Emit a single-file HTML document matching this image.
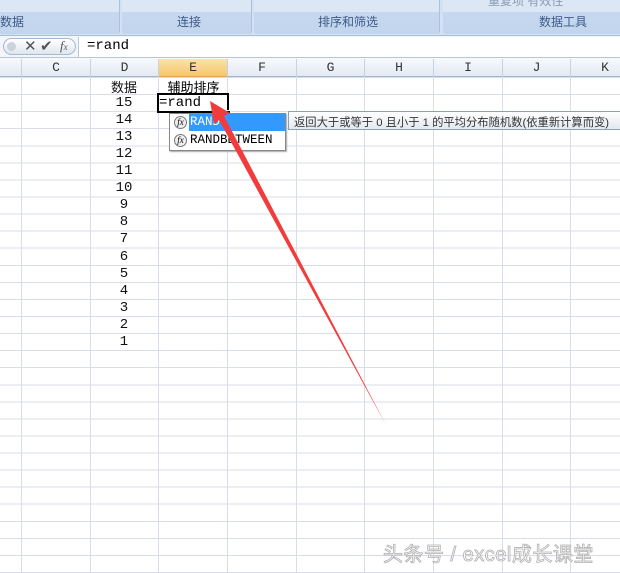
<!DOCTYPE html>
<html><head><meta charset="utf-8"><style>
*{margin:0;padding:0;box-sizing:border-box}
body{width:620px;height:573px;overflow:hidden;background:#fff;position:relative;font-family:"Liberation Mono","Noto Serif CJK SC",monospace}
.abs{position:absolute}
.rib{left:0;top:0;width:620px;height:36px;background:#d3e1f2;border-bottom:1px solid #a9bfd6}
.grp{position:absolute;top:0;height:34px;border-right:1px solid #a9c1dc;background:linear-gradient(#dce7f5 0,#dce7f5 12px,#c6d8ef 12px,#c2d5ee 34px);border-radius:0 0 3px 3px}
.gl{position:absolute;top:13px;font:12px "Liberation Sans","Noto Sans CJK SC",sans-serif;color:#3d5a86;text-align:center}
.fb{left:0;top:36px;width:620px;height:22px;background:#f3f5f9;border-bottom:1px solid #b9c6d8}
.grid{left:0;top:77px;width:620px;height:496px;
background-image:repeating-linear-gradient(to bottom,#d8dde9 0,#d8dde9 1px,transparent 1px,transparent 17.07px);}
.vl{position:absolute;top:58px;width:1px;height:515px;background:#d8dde9}
.hdr{left:0;top:58px;width:620px;height:19px;background:linear-gradient(#f7f9fc,#e4eaf3);border-bottom:1px solid #9eb6ce}
.hc{position:absolute;top:59px;height:18px;font-size:13px;color:#333;text-align:center;line-height:18px;border-right:1px solid #c5d2e2}
.num{position:absolute;left:91px;width:66px;text-align:center;font-size:14px;color:#111}
</style></head><body>
<div class="abs rib">
 <div class="grp" style="left:-5px;width:125px"></div>
 <div class="grp" style="left:122px;width:130px"></div>
 <div class="grp" style="left:254px;width:186px"></div>
 <div class="grp" style="left:443px;width:180px"></div>
 <div class="gl" style="left:0;top:13px">数据</div>
 <div class="gl" style="left:177px">连接</div>
 <div class="gl" style="left:318px">排序和筛选</div>
 <div class="gl" style="left:539px">数据工具</div>
 <div class="gl" style="left:488px;top:-8px;color:#8a9bb3">重复项 有效性</div>
</div>
<div class="abs fb">
 <div class="abs" style="left:3px;top:2px;width:73px;height:17px;border:1px solid #a8b9cf;border-radius:9px;background:linear-gradient(#fff,#dfe6f0)"></div>
 <div class="abs" style="left:7px;top:6px;width:9px;height:9px;border-radius:50%;background:#c9d2dd"></div>
 <div class="abs" style="left:24px;top:1px;font:15px 'Liberation Sans',sans-serif;color:#555">✕</div>
 <div class="abs" style="left:40px;top:1px;font:15px 'DejaVu Sans',sans-serif;color:#555">✔</div>
 <div class="abs" style="left:60px;top:2px;font:italic 13px 'Liberation Serif',serif;color:#555">f<span style="font-size:9px">x</span></div>
 <div class="abs" style="left:78px;top:1px;width:542px;height:20px;background:#fff;border-left:1px solid #b9c6d8"></div>
 <div class="abs" style="left:87px;top:2px;font-size:14px;color:#000">=rand</div>
</div>
<div class="abs grid"></div>
<div class="vl" style="left:21px"></div><div class="vl" style="left:90px"></div><div class="vl" style="left:158px"></div><div class="vl" style="left:227px"></div><div class="vl" style="left:296px"></div><div class="vl" style="left:364px"></div><div class="vl" style="left:433px"></div><div class="vl" style="left:502px"></div><div class="vl" style="left:570px"></div>
<div class="abs hdr"></div>
<div class="hc" style="left:0;width:22px"></div>
<div class="hc" style="left:22px;width:69px">C</div>
<div class="hc" style="left:91px;width:68px">D</div>
<div class="hc" style="left:159px;width:69px;background:linear-gradient(#fbe3a8,#f6c66b);border-bottom:1px solid #e4a84a">E</div>
<div class="hc" style="left:228px;width:69px">F</div>
<div class="hc" style="left:297px;width:68px">G</div>
<div class="hc" style="left:365px;width:69px">H</div>
<div class="hc" style="left:434px;width:69px">I</div>
<div class="hc" style="left:503px;width:68px">J</div>
<div class="hc" style="left:571px;width:69px">K</div>
<div class="num" style="top:77px;font-family:'Noto Sans CJK SC',sans-serif;font-size:13px">数据</div>
<div class="abs" style="left:159px;top:77px;width:69px;text-align:center;font:13px 'Noto Sans CJK SC',sans-serif">辅助排序</div>
<div class="num" style="top:95px">15</div><div class="num" style="top:112px">14</div><div class="num" style="top:129px">13</div><div class="num" style="top:146px">12</div><div class="num" style="top:163px">11</div><div class="num" style="top:180px">10</div><div class="num" style="top:197px">9</div><div class="num" style="top:214px">8</div><div class="num" style="top:231px">7</div><div class="num" style="top:249px">6</div><div class="num" style="top:266px">5</div><div class="num" style="top:283px">4</div><div class="num" style="top:300px">3</div><div class="num" style="top:317px">2</div><div class="num" style="top:334px">1</div>
<div class="abs" style="left:157px;top:93px;width:72px;height:20px;border:2px solid #000;background:#fff"></div>
<div class="abs" style="left:226px;top:110px;width:5px;height:5px;background:#000;border:1px solid #fff"></div>
<div class="abs" style="left:159px;top:95px;font-size:14px">=rand</div>
<div class="abs" style="left:169px;top:113px;width:117px;height:38px;background:#fff;border:1px solid #888;box-shadow:1px 1px 1px #aaa"></div>
<div class="abs" style="left:189px;top:114px;width:96px;height:17px;background:#3399ff"></div>
<div class="abs" style="left:174px;top:116px;width:13px;height:13px;border-radius:50%;border:1px solid #777;background:#eee;font:italic 9px serif;text-align:center;line-height:11px">fx</div>
<div class="abs" style="left:174px;top:134px;width:13px;height:13px;border-radius:50%;border:1px solid #777;background:#eee;font:italic 9px serif;text-align:center;line-height:11px">fx</div>
<div class="abs" style="left:190px;top:115px;font:12.5px 'Liberation Mono',monospace;color:#fff">RAND</div>
<div class="abs" style="left:190px;top:133px;font:12.5px 'Liberation Mono',monospace;color:#000">RANDBETWEEN</div>
<div class="abs" style="left:288px;top:111px;width:334px;height:19px;background:linear-gradient(#fff,#e3e8f0);border:1px solid #8f9fb3;font:11.3px 'Liberation Sans','Noto Sans CJK SC',sans-serif;color:#333;padding:2px 0 0 5px;white-space:nowrap;overflow:hidden">返回大于或等于 0 且小于 1 的平均分布随机数(依重新计算而变)</div>
<svg class="abs" style="left:0;top:0" width="620" height="573"><polygon points="210,101 230,113 224,116 386,425 219,120 214,124" fill="#f23b3b"/></svg>
<div class="abs" style="left:383px;top:538px;font:20px 'Liberation Sans','Noto Sans CJK SC',sans-serif;color:#fff;-webkit-text-stroke:0.8px #b0b0b0;letter-spacing:0.5px">头条号 / excel成长课堂</div>
</body></html>
